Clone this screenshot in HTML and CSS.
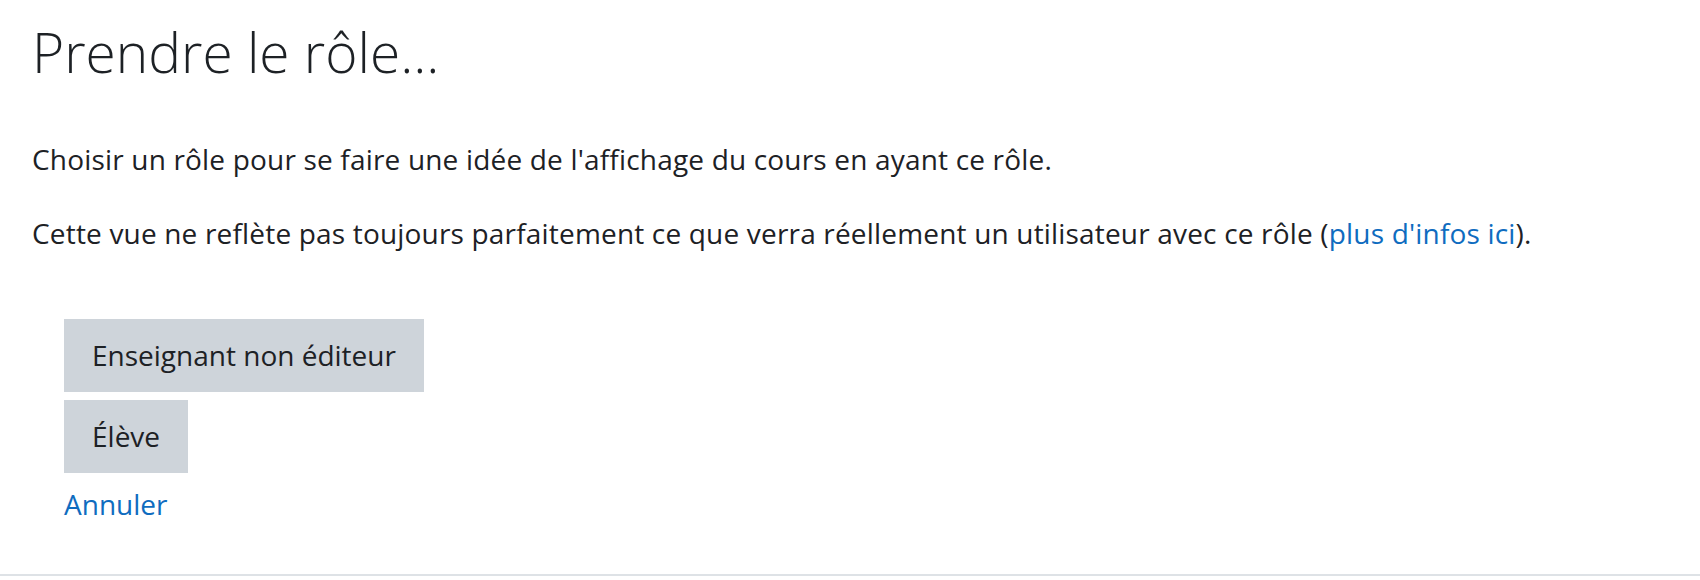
FILE: index.html
```html
<!DOCTYPE html>
<html lang="fr">
<head>
<meta charset="utf-8">
<title>Prendre le rôle...</title>
<link rel="stylesheet" href="styles.css">
</head>
<body>
<main class="page">
  <h2 class="title">Prendre le rôle...</h2>
  <p class="text">Choisir un rôle pour se faire une idée de l'affichage du cours en ayant ce rôle.</p>
  <p class="text">Cette vue ne reflète pas toujours parfaitement ce que verra réellement un utilisateur avec ce rôle (<a class="link" href="#">plus d'infos ici</a>).</p>
  <div class="roles">
    <button class="btn" type="button">Enseignant non éditeur</button>
    <button class="btn" type="button">Élève</button>
    <a class="link cancel" href="#">Annuler</a>
  </div>
</main>
<div class="footer-line"></div>
</body>
</html>
```

FILE: styles.css
```css
html, body {
  margin: 0;
  padding: 0;
  background: #fff;
}
body {
  font-family: "Open Sans", "Noto Sans", sans-serif;
  color: #1d2125;
  width: 1700px;
  height: 580px;
  display: flex;
  flex-direction: column;
}
.page {
  flex: 1;
  padding: 16px 32px 0;
}
.title {
  margin: 0 0 51px;
  font-size: 55px;
  font-weight: 300;
  line-height: 72px;
}
.text {
  margin: 0 0 33px;
  font-size: 28px;
  line-height: 41px;
  letter-spacing: 0.18px;
}
.link {
  color: #0f6cbf;
  text-decoration: none;
}
.roles {
  display: flex;
  flex-direction: column;
  align-items: flex-start;
  gap: 8px;
  padding-left: 32px;
  margin-top: 65px;
}
.btn {
  font-family: inherit;
  font-size: 28px;
  line-height: 41px;
  color: #1d2125;
  background: #ced4da;
  border: 0;
  border-radius: 0;
  padding: 16px 28px;
}
.cancel {
  margin-top: 3px;
  font-size: 28px;
  line-height: 41px;
}
.footer-line {
  height: 2px;
  background: #dee2e6;
  margin-bottom: 4px;
}
```
